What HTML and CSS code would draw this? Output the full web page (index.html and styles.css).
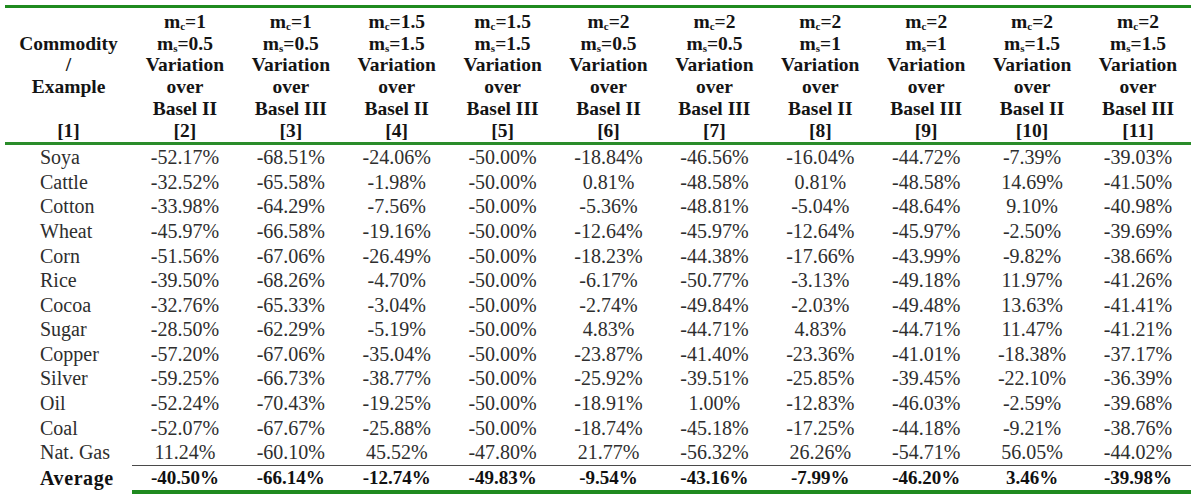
FILE: index.html
```html
<!DOCTYPE html>
<html>
<head>
<meta charset="utf-8">
<link rel="stylesheet" href="styles.css">
</head>
<body>
<table class="tbl">
  <colgroup>
    <col class="c-first">
    <col class="c-val"><col class="c-val"><col class="c-val"><col class="c-val"><col class="c-val">
    <col class="c-val"><col class="c-val"><col class="c-val"><col class="c-val"><col class="c-val">
  </colgroup>
  <thead>
    <tr>
      <th>&nbsp;<br>Commodity<br>/<br>Example<br>&nbsp;<br>[1]</th>
      <th>m<sub>c</sub>=1<br>m<sub>s</sub>=0.5<br>Variation<br>over<br>Basel II<br>[2]</th>
      <th>m<sub>c</sub>=1<br>m<sub>s</sub>=0.5<br>Variation<br>over<br>Basel III<br>[3]</th>
      <th>m<sub>c</sub>=1.5<br>m<sub>s</sub>=1.5<br>Variation<br>over<br>Basel II<br>[4]</th>
      <th>m<sub>c</sub>=1.5<br>m<sub>s</sub>=1.5<br>Variation<br>over<br>Basel III<br>[5]</th>
      <th>m<sub>c</sub>=2<br>m<sub>s</sub>=0.5<br>Variation<br>over<br>Basel II<br>[6]</th>
      <th>m<sub>c</sub>=2<br>m<sub>s</sub>=0.5<br>Variation<br>over<br>Basel III<br>[7]</th>
      <th>m<sub>c</sub>=2<br>m<sub>s</sub>=1<br>Variation<br>over<br>Basel II<br>[8]</th>
      <th>m<sub>c</sub>=2<br>m<sub>s</sub>=1<br>Variation<br>over<br>Basel III<br>[9]</th>
      <th>m<sub>c</sub>=2<br>m<sub>s</sub>=1.5<br>Variation<br>over<br>Basel II<br>[10]</th>
      <th>m<sub>c</sub>=2<br>m<sub>s</sub>=1.5<br>Variation<br>over<br>Basel III<br>[11]</th>
    </tr>
  </thead>
  <tbody>
    <tr><td>Soya</td><td>-52.17%</td><td>-68.51%</td><td>-24.06%</td><td>-50.00%</td><td>-18.84%</td><td>-46.56%</td><td>-16.04%</td><td>-44.72%</td><td>-7.39%</td><td>-39.03%</td></tr>
    <tr><td>Cattle</td><td>-32.52%</td><td>-65.58%</td><td>-1.98%</td><td>-50.00%</td><td>0.81%</td><td>-48.58%</td><td>0.81%</td><td>-48.58%</td><td>14.69%</td><td>-41.50%</td></tr>
    <tr><td>Cotton</td><td>-33.98%</td><td>-64.29%</td><td>-7.56%</td><td>-50.00%</td><td>-5.36%</td><td>-48.81%</td><td>-5.04%</td><td>-48.64%</td><td>9.10%</td><td>-40.98%</td></tr>
    <tr><td>Wheat</td><td>-45.97%</td><td>-66.58%</td><td>-19.16%</td><td>-50.00%</td><td>-12.64%</td><td>-45.97%</td><td>-12.64%</td><td>-45.97%</td><td>-2.50%</td><td>-39.69%</td></tr>
    <tr><td>Corn</td><td>-51.56%</td><td>-67.06%</td><td>-26.49%</td><td>-50.00%</td><td>-18.23%</td><td>-44.38%</td><td>-17.66%</td><td>-43.99%</td><td>-9.82%</td><td>-38.66%</td></tr>
    <tr><td>Rice</td><td>-39.50%</td><td>-68.26%</td><td>-4.70%</td><td>-50.00%</td><td>-6.17%</td><td>-50.77%</td><td>-3.13%</td><td>-49.18%</td><td>11.97%</td><td>-41.26%</td></tr>
    <tr><td>Cocoa</td><td>-32.76%</td><td>-65.33%</td><td>-3.04%</td><td>-50.00%</td><td>-2.74%</td><td>-49.84%</td><td>-2.03%</td><td>-49.48%</td><td>13.63%</td><td>-41.41%</td></tr>
    <tr><td>Sugar</td><td>-28.50%</td><td>-62.29%</td><td>-5.19%</td><td>-50.00%</td><td>4.83%</td><td>-44.71%</td><td>4.83%</td><td>-44.71%</td><td>11.47%</td><td>-41.21%</td></tr>
    <tr><td>Copper</td><td>-57.20%</td><td>-67.06%</td><td>-35.04%</td><td>-50.00%</td><td>-23.87%</td><td>-41.40%</td><td>-23.36%</td><td>-41.01%</td><td>-18.38%</td><td>-37.17%</td></tr>
    <tr><td>Silver</td><td>-59.25%</td><td>-66.73%</td><td>-38.77%</td><td>-50.00%</td><td>-25.92%</td><td>-39.51%</td><td>-25.85%</td><td>-39.45%</td><td>-22.10%</td><td>-36.39%</td></tr>
    <tr><td>Oil</td><td>-52.24%</td><td>-70.43%</td><td>-19.25%</td><td>-50.00%</td><td>-18.91%</td><td>1.00%</td><td>-12.83%</td><td>-46.03%</td><td>-2.59%</td><td>-39.68%</td></tr>
    <tr><td>Coal</td><td>-52.07%</td><td>-67.67%</td><td>-25.88%</td><td>-50.00%</td><td>-18.74%</td><td>-45.18%</td><td>-17.25%</td><td>-44.18%</td><td>-9.21%</td><td>-38.76%</td></tr>
    <tr><td>Nat. Gas</td><td>11.24%</td><td>-60.10%</td><td>45.52%</td><td>-47.80%</td><td>21.77%</td><td>-56.32%</td><td>26.26%</td><td>-54.71%</td><td>56.05%</td><td>-44.02%</td></tr>
  </tbody>
  <tfoot>
    <tr><td>Average</td><td>-40.50%</td><td>-66.14%</td><td>-12.74%</td><td>-49.83%</td><td>-9.54%</td><td>-43.16%</td><td>-7.99%</td><td>-46.20%</td><td>3.46%</td><td>-39.98%</td></tr>
  </tfoot>
</table>
</body>
</html>
```
FILE: styles.css
```css
html, body {
  margin: 0;
  padding: 0;
  background: #ffffff;
}
body {
  padding: 5px 0 0 5px;
  font-family: "Liberation Serif", "Times New Roman", serif;
}
.tbl {
  width: 1186px;
  table-layout: fixed;
  border-collapse: separate;
  border-spacing: 0;
}
.c-first { width: 127px; }
.c-val { width: 105.9px; }

.tbl th {
  font-weight: bold;
  font-size: 19.5px;
  line-height: 21.7px;
  color: #141414;
  text-align: center;
  vertical-align: bottom;
  padding: 3px 0 1px 0;
  border-top: 3px solid #1f8a1f;
  border-bottom: 3px solid #2a8c2a;
  white-space: nowrap;
}
.tbl sub {
  font-size: 11px;
  line-height: 0;
  vertical-align: -2px;
}
.tbl td {
  font-size: 20px;
  line-height: 24.58px;
  padding: 0;
  color: #2e2e2e;
  text-align: center;
  white-space: nowrap;
}
.tbl tbody td:first-child,
.tbl tfoot td:first-child {
  text-align: left;
  padding-left: 35px;
}
.tbl tfoot td {
  font-weight: bold;
  font-size: 19px;
  line-height: 24px;
  color: #111111;
  border-top: 1px solid #4a4a4a;
  border-bottom: 4px solid #1f8a1f;
}
.tbl tfoot td:first-child {
  font-size: 20px;
  letter-spacing: 0.6px;
  border-top: 1px solid transparent;
  border-bottom: 4px solid transparent;
  background-image: linear-gradient(#4a4a4a, #4a4a4a), linear-gradient(#1f8a1f, #1f8a1f);
  background-repeat: no-repeat;
  background-size: 105px 1px, 106px 4px;
  background-position: right -1px top -1px, right 0 bottom -4px;
  background-origin: border-box;
  background-clip: border-box;
}
```
